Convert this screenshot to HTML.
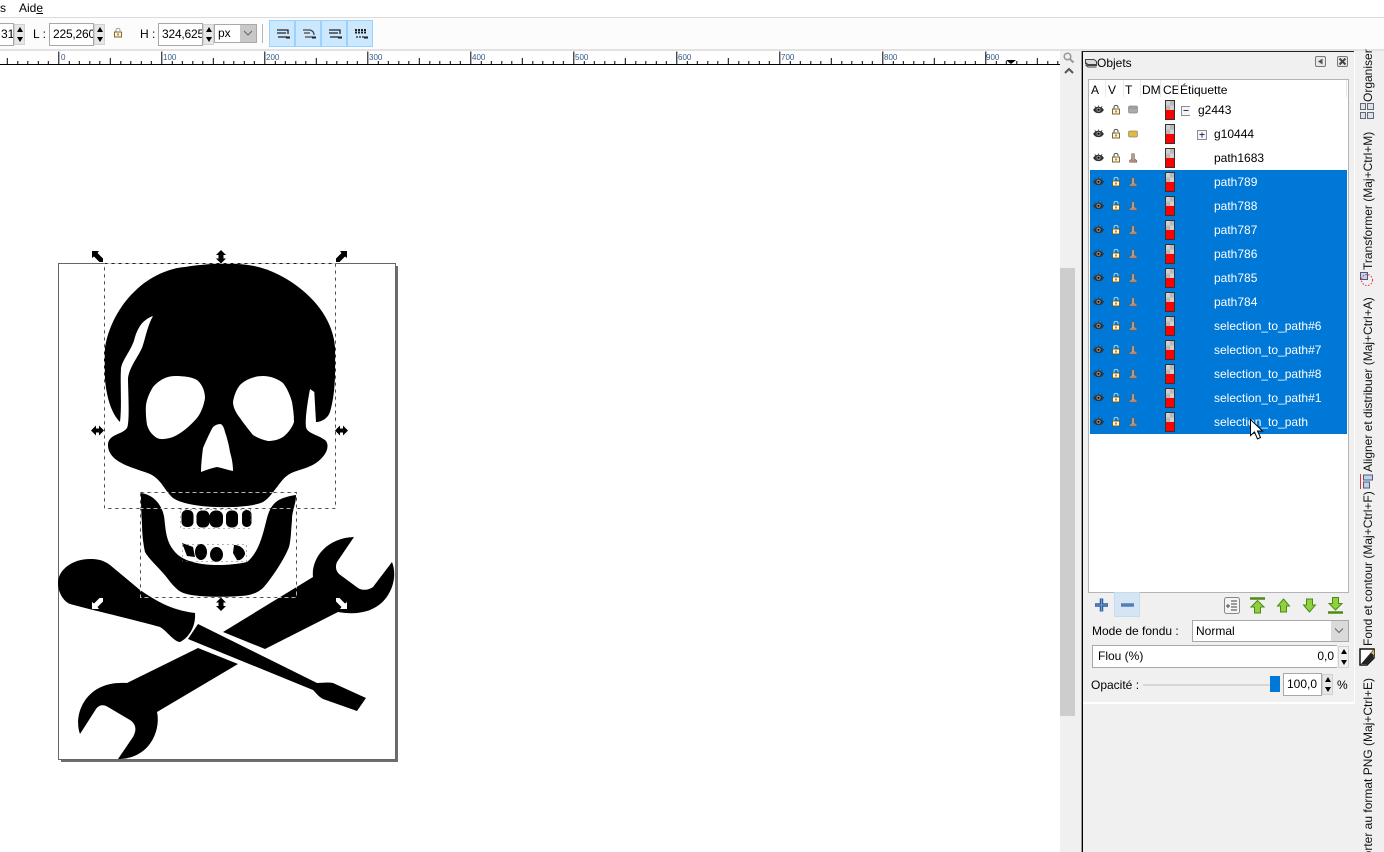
<!DOCTYPE html>
<html lang="fr"><head><meta charset="utf-8"><title>Inkscape</title>
<style>
html,body{margin:0;padding:0;width:1384px;height:852px;overflow:hidden;background:#fff}
body{position:relative;font:12px/14px "Liberation Sans",sans-serif;color:#000}
.a{position:absolute}
.t{position:absolute;white-space:nowrap}
.in{position:absolute;box-sizing:border-box;background:#fff;border:1px solid #a8a8a8;height:23px;line-height:21px;padding-left:3px;overflow:hidden;white-space:nowrap}
.spin{position:absolute;width:11px;height:21px;background:#e6e6e6;border:1px solid #d0d0d0;box-sizing:border-box}
.spin:before{content:"";position:absolute;left:2px;top:2px;border:3px solid transparent;border-top:0;border-bottom:5px solid #000}
.spin:after{content:"";position:absolute;left:2px;bottom:2px;border:3px solid transparent;border-bottom:0;border-top:5px solid #000}
.tb{position:absolute;top:20px;width:26px;height:27px;box-sizing:border-box;background:#cce8ff;border:1px solid #99d1ff}
.row{position:absolute;left:1090px;width:257px;height:24px}
.row.s{background:#0078d7;color:#fff}
.row span{position:absolute;top:5px;white-space:nowrap}
.row svg{position:absolute;left:0;top:0}
.v{position:absolute;left:1361px;width:14px;writing-mode:vertical-rl;transform:rotate(180deg);white-space:nowrap;line-height:14px;color:#111}
</style></head><body>

<svg width="0" height="0" style="position:absolute"><defs>
<symbol id="eye" viewBox="0 0 12 10"><path d="M0 5.500C2 2.500 4 2 6 2S10 2.500 12 5.500C10 8.500 8 9 6 9S2 8.500 0 5.500Z" fill="#333"/><circle cx="6" cy="5.300" r="2.300" fill="#999"/><circle cx="6" cy="5.300" r="1.200" fill="#000"/><path d="M2 1.500L3 3M6 .5V2M10 1.500L9 3" stroke="#444" fill="none"/></symbol>
<symbol id="lock" viewBox="0 0 10 11"><path d="M3 5V3.200C3 .8 7 .8 7 3V4" fill="none" stroke="currentColor" stroke-opacity=".65" stroke-width="1.100"/><rect x="1.500" y="5" width="7" height="5" fill="#fff6cf" stroke="#6d5a20" stroke-width=".9"/><rect x="4.500" y="6.500" width="1" height="2" fill="#333"/></symbol>
<symbol id="pth" viewBox="0 0 12 12"><path d="M4.500 1H7.500L7.500 7L10.500 9V11H2V9L4.500 7.500Z" fill="#b9a58e" stroke="#6c5d50" stroke-width=".8"/><path d="M3.500 9.500H9.500" stroke="#c44" stroke-width=".7"/></symbol>
<symbol id="sw" viewBox="0 0 10 20"><rect x=".5" y=".5" width="9" height="19" fill="#b8b8b8" stroke="#333"/><rect x="1" y="1" width="4" height="4.500" fill="#d0d0d0"/><rect x="5" y="5.500" width="4" height="4.500" fill="#d0d0d0"/><rect x="1" y="10" width="8" height="9" fill="#f00"/></symbol>
</defs></svg>

<!-- menu and toolbar -->
<div class="t" style="left:0;top:1px">s</div>
<div class="t" style="left:19px;top:1px">Aid<u>e</u></div>
<div class="a" style="left:0;top:17px;width:1384px;height:1px;background:#dcdcdc"></div>
<div class="a" style="left:0;top:18px;width:1384px;height:31px;background:#fcfcfc"></div>
<div class="a" style="left:0;top:49px;width:1384px;height:2px;background:#e2e2e2"></div>

<div class="in" style="left:-10px;top:23px;width:24px;padding-left:10px">31</div><div class="spin" style="left:14px;top:24px"></div>
<div class="t" style="left:33px;top:27px">L :</div>
<div class="in" style="left:49px;top:23px;width:45px;letter-spacing:-.2px">225,260</div><div class="spin" style="left:94px;top:24px"></div>
<svg class="a" style="left:113px;top:27px;color:#777" width="10" height="11"><use href="#lock"/></svg>
<div class="t" style="left:140px;top:27px">H :</div>
<div class="in" style="left:158px;top:23px;width:45px;letter-spacing:-.2px">324,625</div><div class="spin" style="left:203px;top:24px"></div>
<div class="in" style="left:214px;top:24px;width:43px;height:19px;line-height:17px">px</div>
<div class="a" style="left:240px;top:25px;width:16px;height:17px;background:#c8c8c8"></div>
<svg class="a" style="left:242px;top:29px" width="12" height="8"><path d="M2 2L6 6L10 2" fill="none" stroke="#666"/></svg>
<div class="a" style="left:262px;top:24px;width:1px;height:19px;background:#b5b5b5"></div>
<div class="tb" style="left:269px"></div><div class="tb" style="left:295px"></div><div class="tb" style="left:321px"></div><div class="tb" style="left:347px"></div>
<svg class="a" style="left:269px;top:20px" width="104" height="27" fill="none" stroke="#222">
<path d="M8 10H19V14M8 13H17M9 17H18" stroke-width="1.300"/><path d="M17 17.500H21" stroke-width="2"/>
<path d="M34 10H41Q45 11 45 15M35 13H41M36 17H44" stroke-width="1.300" stroke="#444"/><path d="M43 17.500H47" stroke-width="2"/>
<path d="M60 10H71V14M60 13H69M61 17H70" stroke-width="1.300"/><path d="M69 17.500H73" stroke-width="2"/>
<path d="M86 10H97M86 12.500H97" stroke-width="2" stroke-dasharray="2 1"/><path d="M87 17H96" stroke-width="1.300" stroke-dasharray="2 1"/><path d="M95 17.500H99" stroke-width="2"/>
</svg>

<!-- ruler -->
<svg class="a" style="left:0;top:51px" width="1060" height="15">
<defs><pattern id="rul" x="58.300" y="0" width="103" height="15" patternUnits="userSpaceOnUse">
<path d="M.5 0V14M10.800 10V14M21.100 10V14M31.400 10V14M41.700 10V14M52 7V14M62.300 10V14M72.600 10V14M82.900 10V14M93.200 10V14" stroke="#000" fill="none" shape-rendering="crispEdges"/></pattern></defs>
<rect width="1060" height="13.500" y=".5" fill="url(#rul)"/>
<path d="M0 13.500H1060" stroke="#000" shape-rendering="crispEdges"/>
<path d="M1006 9H1016L1011 13Z" fill="#000"/>
<g font-family="Liberation Sans,sans-serif" font-size="8" fill="#345a8a">
<text x="61" y="9">0</text><text x="163" y="9">100</text><text x="266" y="9">200</text><text x="369" y="9">300</text><text x="472" y="9">400</text><text x="575" y="9">500</text><text x="678" y="9">600</text><text x="781" y="9">700</text><text x="884" y="9">800</text><text x="986" y="9">900</text>
</g></svg>

<!-- scrollbar -->
<div class="a" style="left:1060px;top:51px;width:21px;height:801px;background:#f0f0f0"></div>
<div class="a" style="left:1060px;top:268px;width:15px;height:448px;background:#cdcdcd"></div>
<svg class="a" style="left:1062px;top:51px" width="14" height="34" fill="none" stroke="#999"><circle cx="5.500" cy="5.500" r="3.300" stroke-width="1.500"/><path d="M8 8L11.500 11.500" stroke-width="2"/><path d="M3 22L7 18L11 22" stroke="#555" stroke-width="2"/></svg>
<div class="a" style="left:1081px;top:51px;width:1px;height:801px;background:#9a9a9a"></div>

<!-- right column and panel -->
<div class="a" style="left:1083px;top:51px;width:301px;height:801px;background:#f0f0f0"></div>
<div class="a" style="left:1082px;top:51px;width:1px;height:801px;background:#000"></div>
<div class="a" style="left:1082px;top:51px;width:272px;height:1px;background:#222"></div>
<div class="a" style="left:1354px;top:52px;width:1px;height:651px;background:#fff"></div>
<div class="a" style="left:1083px;top:702px;width:272px;height:2px;background:#fff"></div>

<svg class="a" style="left:1084px;top:56px" width="14" height="13" fill="#ddd" stroke="#444"><path d="M1.500 3.500H10L12.500 5.500V9.500H4L1.500 7.500Z"/><path d="M1.500 6.500L4 8.500H12.500M1.500 9L4 11H12.500" fill="none"/></svg>
<div class="t" style="left:1097px;top:56px">Objets</div>
<svg class="a" style="left:1314px;top:55px" width="36" height="14"><rect x="1.500" y="1.500" width="10" height="10" rx="1.500" fill="#e8e8e8" stroke="#777"/><path d="M8.500 3.500V9.500L4 6.500Z" fill="#555"/><rect x="23.500" y="1.500" width="10" height="10" rx="1.500" fill="#e8e8e8" stroke="#777"/><path d="M25.500 3.500L31.500 9.500M31.500 3.500L25.500 9.500" stroke="#444" stroke-width="2"/></svg>

<div class="a" style="left:1088px;top:79px;width:261px;height:514px;box-sizing:border-box;background:#fff;border:1px solid #b5b5b5"></div>
<div class="t" style="left:1091px;top:83px">A</div>
<div class="t" style="left:1108px;top:83px">V</div>
<div class="t" style="left:1125px;top:83px">T</div>
<div class="t" style="left:1142px;top:83px">DM</div>
<div class="t" style="left:1163px;top:83px">CE</div>
<div class="t" style="left:1180px;top:83px">Étiquette</div>
<svg class="a" style="left:1090px;top:80px" width="258" height="18" stroke="#e8e8e8"><path d="M15.500 0V17M33.500 0V17M50.500 0V17M70.500 0V17M88.500 0V17M256.500 0V17"/></svg>

<div class="row" style="top:98px"><svg width="100" height="24"><use href="#eye" x="3" y="7" width="11" height="9"/><use href="#lock" x="21" y="6" width="10" height="11"/><g fill="#aaa" stroke="#888" stroke-width=".7"><rect x="38.500" y="8" width="9" height="7" rx="1.500"/><path d="M38.500 10H47.500"/></g><use href="#sw" x="75" y="2" width="10" height="20"/><rect x="91.500" y="8.500" width="9" height="9" fill="#f4f4f4" stroke="#8a8a9a"/><path d="M93.500 12.500H98.500" stroke="#335"/></svg><span style="left:108px">g2443</span></div>
<div class="row" style="top:122px"><svg width="120" height="24"><use href="#eye" x="3" y="7" width="11" height="9"/><use href="#lock" x="21" y="6" width="10" height="11"/><g fill="#e3b93a" stroke="#888" stroke-width=".7"><rect x="38.500" y="9" width="9" height="6" rx="1.500"/></g><use href="#sw" x="75" y="2" width="10" height="20"/><rect x="107.500" y="8.500" width="9" height="9" fill="#f4f4f4" stroke="#8a8a9a"/><path d="M109.500 12.500H114.500M112 10.500V15.500" stroke="#335"/></svg><span style="left:124px">g10444</span></div>
<div class="row" style="top:146px"><svg width="100" height="24"><use href="#eye" x="3" y="7" width="11" height="9"/><use href="#lock" x="21" y="6" width="10" height="11"/><use href="#pth" x="38" y="6.500" width="10" height="11"/><use href="#sw" x="75" y="2" width="10" height="20"/></svg><span style="left:124px">path1683</span></div>
<div class="row s" style="top:170px"><svg width="100" height="24"><use href="#eye" x="3" y="7" width="11" height="9"/><use href="#lock" x="21" y="6" width="10" height="11"/><use href="#pth" x="38" y="6.500" width="10" height="11"/><use href="#sw" x="75" y="2" width="10" height="20"/></svg><span style="left:124px">path789</span></div>
<div class="row s" style="top:194px"><svg width="100" height="24"><use href="#eye" x="3" y="7" width="11" height="9"/><use href="#lock" x="21" y="6" width="10" height="11"/><use href="#pth" x="38" y="6.500" width="10" height="11"/><use href="#sw" x="75" y="2" width="10" height="20"/></svg><span style="left:124px">path788</span></div>
<div class="row s" style="top:218px"><svg width="100" height="24"><use href="#eye" x="3" y="7" width="11" height="9"/><use href="#lock" x="21" y="6" width="10" height="11"/><use href="#pth" x="38" y="6.500" width="10" height="11"/><use href="#sw" x="75" y="2" width="10" height="20"/></svg><span style="left:124px">path787</span></div>
<div class="row s" style="top:242px"><svg width="100" height="24"><use href="#eye" x="3" y="7" width="11" height="9"/><use href="#lock" x="21" y="6" width="10" height="11"/><use href="#pth" x="38" y="6.500" width="10" height="11"/><use href="#sw" x="75" y="2" width="10" height="20"/></svg><span style="left:124px">path786</span></div>
<div class="row s" style="top:266px"><svg width="100" height="24"><use href="#eye" x="3" y="7" width="11" height="9"/><use href="#lock" x="21" y="6" width="10" height="11"/><use href="#pth" x="38" y="6.500" width="10" height="11"/><use href="#sw" x="75" y="2" width="10" height="20"/></svg><span style="left:124px">path785</span></div>
<div class="row s" style="top:290px"><svg width="100" height="24"><use href="#eye" x="3" y="7" width="11" height="9"/><use href="#lock" x="21" y="6" width="10" height="11"/><use href="#pth" x="38" y="6.500" width="10" height="11"/><use href="#sw" x="75" y="2" width="10" height="20"/></svg><span style="left:124px">path784</span></div>
<div class="row s" style="top:314px"><svg width="100" height="24"><use href="#eye" x="3" y="7" width="11" height="9"/><use href="#lock" x="21" y="6" width="10" height="11"/><use href="#pth" x="38" y="6.500" width="10" height="11"/><use href="#sw" x="75" y="2" width="10" height="20"/></svg><span style="left:124px">selection_to_path#6</span></div>
<div class="row s" style="top:338px"><svg width="100" height="24"><use href="#eye" x="3" y="7" width="11" height="9"/><use href="#lock" x="21" y="6" width="10" height="11"/><use href="#pth" x="38" y="6.500" width="10" height="11"/><use href="#sw" x="75" y="2" width="10" height="20"/></svg><span style="left:124px">selection_to_path#7</span></div>
<div class="row s" style="top:362px"><svg width="100" height="24"><use href="#eye" x="3" y="7" width="11" height="9"/><use href="#lock" x="21" y="6" width="10" height="11"/><use href="#pth" x="38" y="6.500" width="10" height="11"/><use href="#sw" x="75" y="2" width="10" height="20"/></svg><span style="left:124px">selection_to_path#8</span></div>
<div class="row s" style="top:386px"><svg width="100" height="24"><use href="#eye" x="3" y="7" width="11" height="9"/><use href="#lock" x="21" y="6" width="10" height="11"/><use href="#pth" x="38" y="6.500" width="10" height="11"/><use href="#sw" x="75" y="2" width="10" height="20"/></svg><span style="left:124px">selection_to_path#1</span></div>
<div class="row s" style="top:410px"><svg width="100" height="24"><use href="#eye" x="3" y="7" width="11" height="9"/><use href="#lock" x="21" y="6" width="10" height="11"/><use href="#pth" x="38" y="6.500" width="10" height="11"/><use href="#sw" x="75" y="2" width="10" height="20"/></svg><span style="left:124px">selection_to_path</span></div>
<svg class="a" style="left:1248px;top:418px" width="16" height="24"><path d="M2.500 1.500V17.500L6.500 14L9.500 21L12.500 19.500L9.500 13H14.500Z" fill="#fff" stroke="#000"/></svg>

<!-- panel buttons -->
<div class="a" style="left:1114px;top:592px;width:26px;height:25px;box-sizing:border-box;background:#d5e5f3;border:1px solid #c4dcf0"></div>
<svg class="a" style="left:1090px;top:592px" width="260" height="26">
<path d="M5 13H18M11.500 6.500V19.500" stroke="#2f5f9e" stroke-width="3.500"/><path d="M5.500 13H17.500M11.500 7V19" stroke="#6f9bd0" stroke-width="1"/>
<path d="M31 13H44" stroke="#4f7fb8" stroke-width="3.500"/>
<rect x="134.500" y="5.500" width="15" height="16" rx="2" fill="#f4f4f4" stroke="#888"/><path d="M141 9H147M141 12H147M141 15H147M141 18H147M136 14H140M138 12V16" stroke="#444"/>
<g fill="#8fd13f" stroke="#4c8a14"><path d="M160 6.500H175" stroke-width="2.500"/><path d="M167.500 8.500L174 15H170.500V21H164.500V15H161Z"/>
<path d="M193.500 7L199.500 14H196.500V20H190.500V14H187.500Z"/>
<path d="M219.500 20L213.500 13H216.500V7H222.500V13H225.500Z"/>
<path d="M245.500 18L239 11.500H242.500V5.500H248.500V11.500H252Z"/><path d="M238 20.500H253" stroke-width="2.500"/></g>
</svg>

<div class="t" style="left:1092px;top:624px">Mode de fondu :</div>
<div class="in" style="left:1192px;top:620px;width:157px;height:22px;line-height:20px;border-width:1px;padding-left:3px">Normal</div>
<div class="a" style="left:1331px;top:621px;width:17px;height:20px;background:#dadada"></div>
<svg class="a" style="left:1333px;top:627px" width="12" height="8"><path d="M2 1.500L6 5.500L10 1.500" fill="none" stroke="#666"/></svg>

<div class="in" style="left:1092px;top:645px;width:245px;height:23px;line-height:20px;padding-left:5px;border-right:0">Flou (%)<span style="position:absolute;right:3px">0,0</span></div>
<div class="spin" style="left:1338px;top:646px;height:22px;background:#f0f0f0"></div>

<div class="t" style="left:1091px;top:678px">Opacité :</div>
<div class="a" style="left:1143px;top:684px;width:128px;height:2px;background:#d6d6d6"></div>
<div class="a" style="left:1270px;top:676px;width:10px;height:16px;background:#0078d7"></div>
<div class="in" style="left:1283px;top:673px;width:39px;line-height:21px;padding-left:3px">100,0</div>
<div class="spin" style="left:1322px;top:674px;height:21px"></div>
<div class="t" style="left:1337px;top:678px">%</div>

<!-- vertical tabs -->
<div class="v" style="top:52px;height:50px">Organiser</div>
<svg class="a" style="left:1359px;top:102px" width="16" height="18" fill="#dde3ec" stroke="#667"><rect x="1.500" y="1.500" width="5" height="6"/><rect x="8.500" y="1.500" width="6" height="6"/><rect x="1.500" y="10.500" width="5" height="6"/><rect x="8.500" y="10.500" width="6" height="6"/></svg>
<div class="v" style="top:100px;height:170px">Transformer (Maj+Ctrl+M)</div>
<svg class="a" style="left:1359px;top:271px" width="16" height="17"><rect x="1.500" y="1.500" width="7" height="7" fill="#bcd3ea" stroke="#557"/><circle cx="8" cy="9" r="5.500" fill="none" stroke="#d33" stroke-dasharray="1.500 1.500"/></svg>
<div class="v" style="top:270px;height:202px">Aligner et distribuer (Maj+Ctrl+A)</div>
<svg class="a" style="left:1359px;top:474px" width="16" height="15"><path d="M1.500 0V15" stroke="#d33"/><rect x="4.500" y="1" width="9" height="5" fill="#bcd3ea" stroke="#557"/><rect x="4.500" y="8" width="6" height="6" fill="#bcd3ea" stroke="#557"/></svg>
<div class="v" style="top:480px;height:166px">Fond et contour (Maj+Ctrl+F)</div>
<svg class="a" style="left:1359px;top:647px" width="16" height="20"><path d="M1 2H15V11L8 18H1Z" fill="#fff" stroke="#111" stroke-width="1.500"/><path d="M2 17L14 3V11L8 17Z" fill="#222"/><path d="M12 6L15 3V8Z" fill="#e4c33a"/></svg>
<div class="v" style="top:678px;height:200px">Exporter au format PNG (Maj+Ctrl+E)</div>

<!-- canvas drawing -->
<svg class="a" style="left:0;top:66px" width="1060" height="786" viewBox="0 66 1060 786">
<rect x="61" y="266" width="337" height="496" fill="#6d6d6d"/>
<rect x="58.500" y="263.500" width="337" height="496" fill="#fff" stroke="#666"/>
<g fill="#000">
<path fill-rule="evenodd" d="M220 263.500C240 264 258 263 283 277C305 289 335 315 335.300 352C335.500 375 335 395 330 412C328 418 322 422 316 422L314.300 392L310 389C307 405 305 420 306 427C307 434 320 435 326 441C330 447 326 456 316 463C305 470 295 470 288 475C280 480 272 497 263 502C250 509 190 510 173 498C164 490 162 480 150 474C135 468 108 463 108 445C108 434 122 435 127 428C130 422 128 390 128 378C130 365 140 355 143 345C146 335 148 325 153 316C142 320 138 328 135 337C132 350 123 358 121 368C120 385 122 405 120 422C108 410 104 385 104 358C105 330 120 305 135 291C150 276 170 268 185 267C197 265 210 264 220 263.500Z
M175 376C184 376 192 377 197 380C202 384 205 391 205 398C204 405 201 413 197 418C190 426 182 433 173 437C167 439 161 440 157 438C152 435 149 431 147 425C146 418 145.500 411 146 405C147 398 150 392 153 387C159 380 167 376 175 376Z
M263 376C271 376 278 379 283 383C287 388 290 395 292 402C293 408 294 415 294 422C292 428 288 433 283 437C278 440 273 441 268 441C263 440 258 438 253 435C249 430 244 424 240 418C236 413 233 407 233 402C234 396 236 390 240 385C246 379 255 376 263 376Z
M220 424C222 424 224 427 225 432C227 438 229 445 230 452C232 459 233 465 233 471C228 470 222 468 217 467C212 468 206 470 201 472C201 464 202 456 203 448C206 441 210 432 213 427C215 425 218 424 220 424Z"/>
<path d="M141 493C153 495 161 503 164 516C166 530 165 543 178 555C188 563 205 565 217 565C228 565 238 564 247 562C258 553 262 538 266 522C270 505 275 498 296 495C296 505 292 510 292 520C291 530 291 540 289 547C285 558 272 578 263 588C256 594 248 596 240 596C227 597 213 597 200 596C190 595 183 594 178 590C170 583 167 577 163 573C157 566 149 559 145 552C143 543 142 533 142 523C141 513 141 503 141 493Z"/>
<rect x="181.500" y="510" width="12" height="17" rx="5"/><rect x="196.500" y="510.500" width="13" height="17" rx="5.500"/><rect x="209.500" y="510.500" width="13.500" height="17" rx="6"/><rect x="226" y="510.500" width="12" height="17" rx="5"/><rect x="242" y="510" width="9.500" height="17" rx="4.500"/>
<path d="M182 543L193 547L195 557L187 556Z"/><ellipse cx="201" cy="552" rx="6" ry="8"/><ellipse cx="216.500" cy="554.500" rx="6.500" ry="7.500"/><path d="M234 545C241 545 245 550 245 554C244 558 240 561 237 560L233 553Z"/>
<path d="M58 583C58 570 72 559 90 559C98 559 103 560 110 565L140 590C155 600 170 610 195 613C196 625 190 637 180 642C174 642 166 630 160 627C135 620 100 612 70 604C63 601 58 592 58 583Z"/>
<path d="M198 624L317 683C322 683 328 682 333 683L366 698L357 711L323 699C319 697 316 693 313 690L188 639Z"/>
<path d="M354 537L337 562C335 567 336 571 339 574L358 588C363 591 369 590 373 587L392 562C396 572 395 586 386 598C377 610 360 616 338 612L265 649L223 632L313 577C311 560 325 538 354 537Z"/>
<path d="M198 648L238 664L157 712C161 730 150 759 118 759L133 737C137 730 136 724 130 720L108 707C103 704 99 705 96 709L80 734C73 715 85 680 127 683Z"/>
</g>
<g fill="none" stroke="#000" stroke-opacity=".7" stroke-dasharray="4 3" shape-rendering="crispEdges">
<rect x="104.500" y="263.500" width="231" height="245" />
<rect x="140.500" y="492.500" width="156" height="105"/>
</g>
<g fill="none" stroke="#fff" stroke-opacity=".7" stroke-dasharray="4 3" stroke-dashoffset="4" shape-rendering="crispEdges">
<rect x="104.500" y="263.500" width="231" height="245" />
<rect x="140.500" y="492.500" width="156" height="105"/>
</g>
<g fill="none" stroke="#666" stroke-dasharray="1 4" shape-rendering="crispEdges">
<rect x="180.500" y="509.500" width="70" height="19" /><rect x="182.500" y="544.500" width="64" height="17"/>
</g>
<!-- handles -->
<g fill="#000">
<path d="M92 251H99L97.500 253L103 258.500V262H99.500L94 256.500L92 258Z"/>
<path d="M347 251H340L341.500 253L336 258.500V262H339.500L345 256.500L347 258Z"/>
<path d="M221 250L226 255H223.500V258.500H226L221 263.500L216 258.500H218.500V255H216Z"/>
<path d="M91 430.500L96 425.500V428.500H99V425.500L104 430.500L99 435.500V432.500H96V435.500Z"/>
<path d="M335 430.500L340 425.500V428.500H343V425.500L348 430.500L343 435.500V432.500H340V435.500Z"/>
<path d="M221 597.500L226 602.500H223.500V606H226L221 611L216 606H218.500V602.500H216Z"/>
</g>
<g fill="#fff">
<path d="M92 609V602L94 603.500L99.500 598H103V601.500L97.500 607L99 609Z"/>
<path d="M347 609V602L345 603.500L339.500 598H336V601.500L341.500 607L340 609Z"/>
</g>
</svg>
</body></html>
